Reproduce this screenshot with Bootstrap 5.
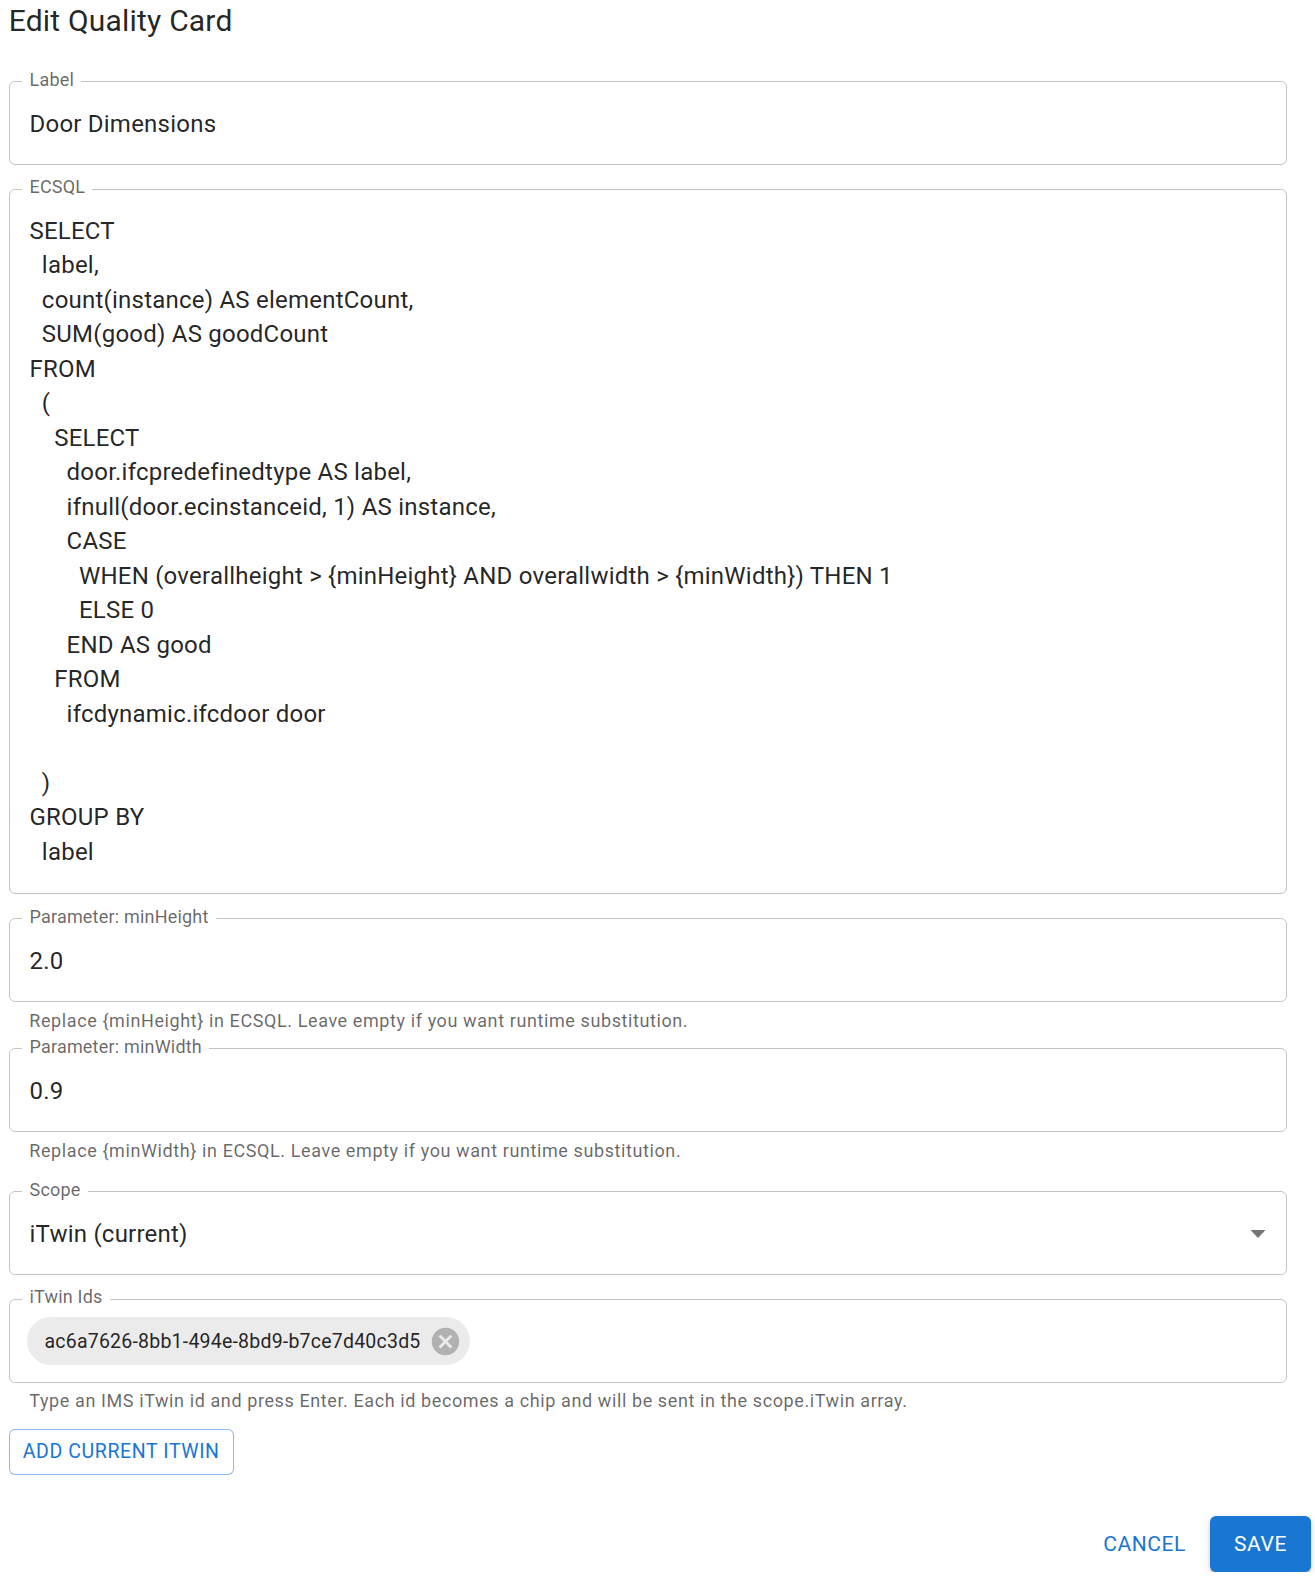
<!DOCTYPE html>
<html lang="en">
<head>
<meta charset="utf-8">
<title>Edit Quality Card</title>
<link href="https://cdn.jsdelivr.net/npm/bootstrap@5.3.0/dist/css/bootstrap.min.css" rel="stylesheet">
<style>
body{font-family:Roboto,"Liberation Sans",sans-serif;background:#fff;color:rgba(0,0,0,.87);}
.qpage{padding:0 4px 0 8.75px;}
.qtitle{font-size:30px;font-weight:400;line-height:42px;margin:0;padding-bottom:27.75px;letter-spacing:.2px;}
.qfield{border:1.5px solid #c4c4c4;border-radius:6px;margin:0 24px 12.75px 0;padding:0 19.75px 21.75px;min-width:0;}
.qfield.qtight{margin-bottom:0;}
.qfield.qcode{padding-bottom:23.75px;}
.qfield.qcode .qval{padding-top:12.5px;}
.qfield legend{float:none;width:auto;font-size:18px;line-height:20px;margin:0 0 0 -7.500px;padding:0 7px 4px 7.5px;color:rgba(0,0,0,.6);letter-spacing:.2px;}
.qval{font-size:24px;line-height:34.5px;padding-top:13.5px;letter-spacing:.225px;white-space:pre;}
.qhelp{font-size:18px;line-height:24px;margin:7.5px 24px 3.75px 20.5px;color:rgba(0,0,0,.6);letter-spacing:.6px;}
.qhelp.qwide{margin-bottom:16.75px;}
.qhelp.qlast{margin-top:5.5px;}
.qselect{display:flex;justify-content:space-between;align-items:center;}
.qcaret{width:24px;height:14px;margin-right:-3.75px;}
.qchipwrap{display:flex;padding:6px 0 0;margin:0 0 -5px -3px;}
.qchip{display:inline-flex;align-items:center;height:48px;border-radius:24px;background:#ebebeb;font-size:19.5px;padding:0 8px 0 18px;gap:8px;color:rgba(0,0,0,.87);letter-spacing:.22px;}
.qchip svg{width:33px;height:33px;}
.qoutline{display:block;font-size:19.5px;line-height:27px;padding:8.5px 13px;margin-top:16.25px;border:1.5px solid rgba(25,118,210,.5);border-radius:6px;color:#1976d2;background:#fff;letter-spacing:.6px;}
.qactions{padding-top:41.5px;gap:12px;}
.qtext{font-size:21px;line-height:36px;padding:9px 12px 10px;color:#1976d2;letter-spacing:.6px;border:0;}
.qsave{font-size:21px;line-height:36px;padding:9.5px 24px 10.5px;background:#1976d2;color:#fff;border:0;border-radius:6px;letter-spacing:.6px;box-shadow:0 4.5px 1.5px -3px rgba(0,0,0,.2),0 3px 3px 0 rgba(0,0,0,.14),0 1.5px 7.5px 0 rgba(0,0,0,.12);}
</style>
</head>
<body>
<main class="qpage">
<h1 class="qtitle">Edit Quality Card</h1>
<fieldset class="qfield"><legend>Label</legend><div class="qval">Door Dimensions</div></fieldset>
<fieldset class="qfield qcode"><legend>ECSQL</legend><div class="qval">SELECT
  label,
  count(instance) AS elementCount,
  SUM(good) AS goodCount
FROM
  (
    SELECT
      door.ifcpredefinedtype AS label,
      ifnull(door.ecinstanceid, 1) AS instance,
      CASE
        WHEN (overallheight &gt; {minHeight} AND overallwidth &gt; {minWidth}) THEN 1
        ELSE 0
      END AS good
    FROM
      ifcdynamic.ifcdoor door

  )
GROUP BY
  label</div></fieldset>
<fieldset class="qfield qtight"><legend>Parameter: minHeight</legend><div class="qval">2.0</div></fieldset>
<p class="qhelp">Replace {minHeight} in ECSQL. Leave empty if you want runtime substitution.</p>
<fieldset class="qfield qtight"><legend>Parameter: minWidth</legend><div class="qval">0.9</div></fieldset>
<p class="qhelp qwide">Replace {minWidth} in ECSQL. Leave empty if you want runtime substitution.</p>
<fieldset class="qfield"><legend>Scope</legend><div class="qval qselect"><span>iTwin (current)</span><svg class="qcaret" viewBox="0 0 24 14" aria-hidden="true"><path d="M4.5 2 12 10 19.500 2z" fill="#757575"/></svg></div></fieldset>
<fieldset class="qfield qtight"><legend>iTwin Ids</legend><div class="qchipwrap"><span class="qchip">ac6a7626-8bb1-494e-8bd9-b7ce7d40c3d5<svg viewBox="0 0 24 24" aria-hidden="true"><path fill="#b1b1b1" d="M12 2C6.470 2 2 6.470 2 12s4.470 10 10 10 10-4.470 10-10S17.530 2 12 2zm5 13.590L15.590 17 12 13.410 8.410 17 7 15.590 10.590 12 7 8.410 8.410 7 12 10.590 15.590 7 17 8.410 13.410 12 17 15.590z"/></svg></span></div></fieldset>
<p class="qhelp qlast">Type an IMS iTwin id and press Enter. Each id becomes a chip and will be sent in the scope.iTwin array.</p>
<button type="button" class="btn qoutline">ADD CURRENT ITWIN</button>
<div class="d-flex justify-content-end qactions">
<button type="button" class="btn qtext">CANCEL</button>
<button type="button" class="btn qsave">SAVE</button>
</div>
</main>
<script src="https://cdn.jsdelivr.net/npm/bootstrap@5.3.0/dist/js/bootstrap.bundle.min.js"></script>
</body>
</html>
